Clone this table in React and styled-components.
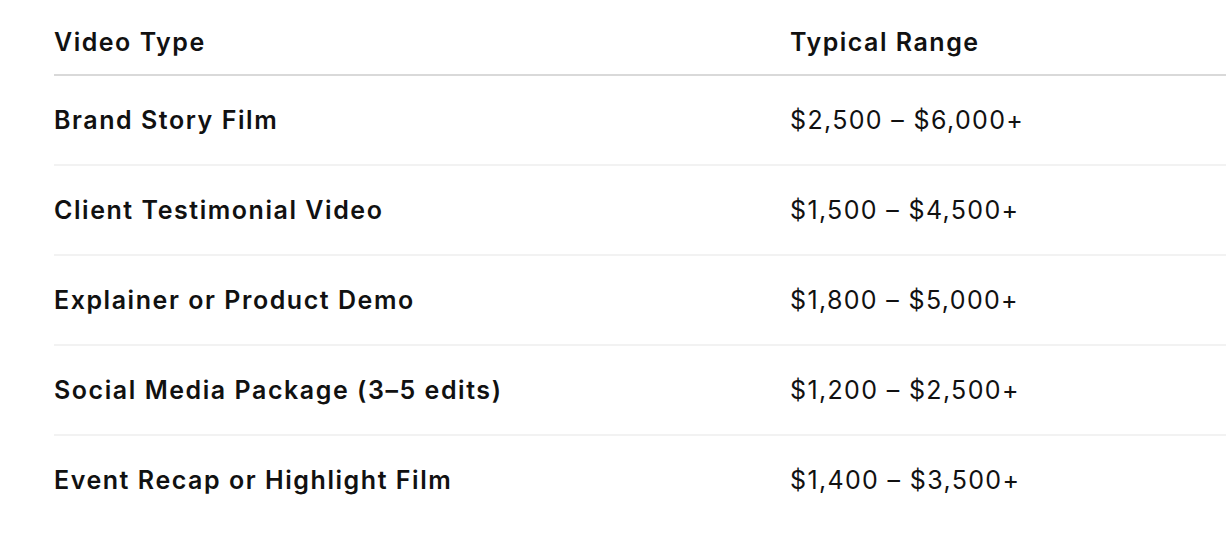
import React from 'react';
import styled, {createGlobalStyle} from 'styled-components';

const GlobalStyle = createGlobalStyle`
    html, body {
        margin: 0;
        padding: 0;
        background: #ffffff;
    }
    body {
        font-family: Inter, "Noto Sans", "Liberation Sans", sans-serif;
        color: #111111;
        -webkit-font-smoothing: antialiased;
    }
`;

const Page = styled.div`
    padding-left: 54px;
    overflow: hidden;
`;

const Table = styled.div`
    display: grid;
    grid-template-columns: 736px 1fr;
    width: calc(100% + 20px);
`;

const HeadCell = styled.div`
    padding: 27px 0 17px;
    line-height: 30px;
    font-size: 25px;
    font-weight: 600;
    letter-spacing: 1.5px;
    border-bottom: 2px solid #d9d9d9;
`;

const Cell = styled.div`
    padding: 29px 0;
    line-height: 30px;
    font-size: 25px;
    font-weight: ${(p) => (p.$label ? 600 : 400)};
    letter-spacing: ${(p) => (p.$label ? '1.55px' : '1.35px')};
    border-bottom: 2px solid ${(p) => (p.$last ? 'transparent' : '#f2f2f2')};
`;

const rows = [
    {type: 'Brand Story Film', range: '$2,500 – $6,000+'},
    {type: 'Client Testimonial Video', range: '$1,500 – $4,500+'},
    {type: 'Explainer or Product Demo', range: '$1,800 – $5,000+'},
    {type: 'Social Media Package (3–5 edits)', range: '$1,200 – $2,500+'},
    {type: 'Event Recap or Highlight Film', range: '$1,400 – $3,500+'},
];

const App = () => {
    return (
        <>
            <GlobalStyle />
            <Page>
                <Table>
                    <HeadCell>Video Type</HeadCell>
                    <HeadCell>Typical Range</HeadCell>
                    {rows.map((r, i) => (
                        <React.Fragment key={r.type}>
                            <Cell $label $last={i === rows.length - 1}>{r.type}</Cell>
                            <Cell $last={i === rows.length - 1}>{r.range}</Cell>
                        </React.Fragment>
                    ))}
                </Table>
            </Page>
        </>
    );
};

export default App;
